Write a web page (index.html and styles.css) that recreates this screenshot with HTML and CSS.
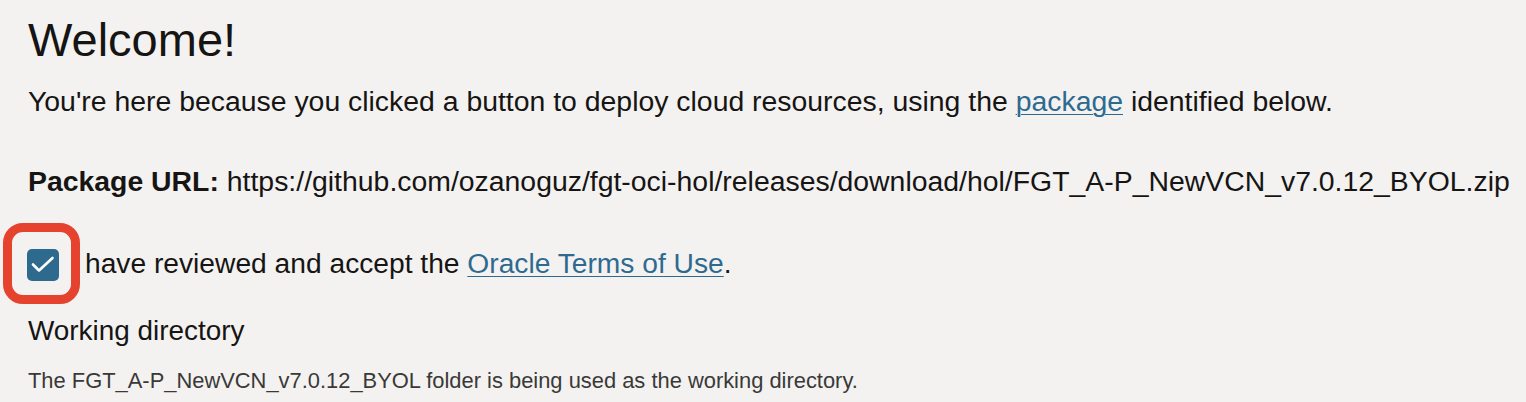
FILE: index.html
```html
<!DOCTYPE html>
<html>
<head>
<meta charset="utf-8">
<link rel="stylesheet" href="styles.css">
</head>
<body>
<main class="page">
  <h1 class="title">Welcome!</h1>
  <p class="intro">You're here because you clicked a button to deploy cloud resources, using the <a href="#" class="link">package</a> identified below.</p>
  <p class="pkg"><strong>Package URL:</strong> https://github.com/ozanoguz/fgt-oci-hol/releases/download/hol/FGT_A-P_NewVCN_v7.0.12_BYOL.zip</p>
  <div class="accept">
    <span class="check-wrap">
      <span class="checkbox">
        <svg viewBox="0 0 32 32" width="32" height="32"><path d="M6 15.5 L12 21.5 L25.5 9" fill="none" stroke="#fff" stroke-width="2.6" stroke-linecap="round" stroke-linejoin="round"/></svg>
      </span>
      <span class="highlight"></span>
    </span>
    <span class="accept-text">have reviewed and accept the <a href="#" class="link">Oracle Terms of Use</a>.</span>
  </div>
  <h2 class="wd-title">Working directory</h2>
  <p class="wd-text">The FGT_A-P_NewVCN_v7.0.12_BYOL folder is being used as the working directory.</p>
</main>
</body>
</html>
```
FILE: styles.css
```css
html, body {
  margin: 0;
  padding: 0;
  background: #f3f2f1;
}
body {
  font-family: "Liberation Sans", Arial, sans-serif;
  color: #161513;
}
.page {
  padding: 12px 0 0 28px;
  display: flex;
  flex-direction: column;
  align-items: flex-start;
}
.title {
  margin: 0;
  font-size: 47px;
  font-weight: 400;
  line-height: 56px;
}
.intro {
  margin: 16px 0 0 0;
  font-size: 28.4px;
  line-height: 34px;
  white-space: nowrap;
}
.link {
  color: #2e6a90;
  text-decoration: underline;
  text-underline-offset: 3px;
  text-decoration-thickness: 1px;
}
.pkg {
  margin: 46px 0 0 0;
  font-size: 28.4px;
  line-height: 34px;
  white-space: nowrap;
}
.pkg strong {
  font-weight: 700;
}
.accept {
  margin-top: 48px;
  display: flex;
  align-items: flex-start;
  gap: 26px;
  font-size: 28.2px;
  line-height: 34px;
}
.check-wrap {
  position: relative;
  display: block;
  width: 32px;
  height: 32px;
  margin-top: 3px;
  margin-left: -1px;
}
.checkbox {
  display: block;
  width: 32px;
  height: 32px;
  border-radius: 5px;
  background: #2d6a8e;
}
.checkbox svg {
  display: block;
}
.highlight {
  position: absolute;
  box-sizing: border-box;
  left: -24px;
  top: -26px;
  width: 77px;
  height: 81px;
  border: 9px solid #e5432d;
  border-radius: 20px;
}
.wd-title {
  margin: 33px 0 0 0;
  font-size: 27.9px;
  font-weight: 400;
  line-height: 34px;
}
.wd-text {
  margin: 19px 0 0 0;
  font-size: 21.9px;
  line-height: 28px;
  color: #3a3937;
  white-space: nowrap;
}
```
